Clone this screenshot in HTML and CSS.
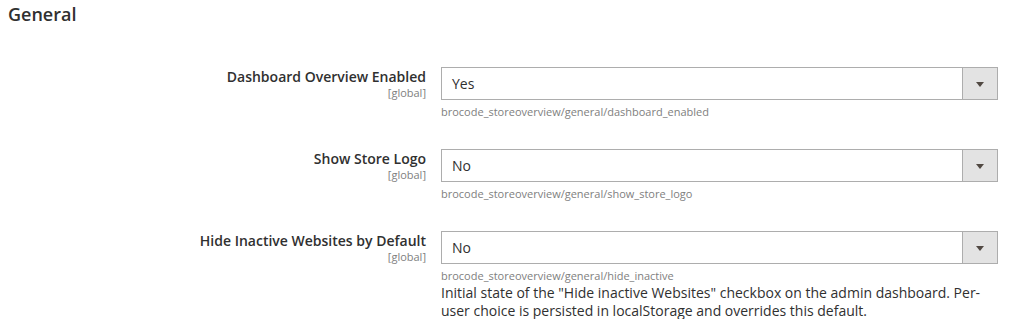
FILE: index.html
```html
<!DOCTYPE html>
<html lang="en">
  <head>
    <meta charset="UTF-8" />
    <meta name="viewport" content="width=device-width, initial-scale=1.0" />
    <title>Store Overview - Configuration</title>
    <link rel="stylesheet" href="styles.css">
  </head>
  <body>
    <div class="section">
      <h2 class="section-title">General</h2>

      <div class="config-rows">
        <div class="config-row">
          <div class="label-col">
            <label class="field-label">Dashboard Overview Enabled</label>
            <span class="scope">[global]</span>
          </div>
          <div class="value-col">
            <div class="select">
              <span class="select-value">Yes</span>
              <span class="select-arrow"></span>
            </div>
            <p class="path">brocode_storeoverview/general/dashboard_enabled</p>
          </div>
        </div>

        <div class="config-row">
          <div class="label-col">
            <label class="field-label">Show Store Logo</label>
            <span class="scope">[global]</span>
          </div>
          <div class="value-col">
            <div class="select">
              <span class="select-value">No</span>
              <span class="select-arrow"></span>
            </div>
            <p class="path">brocode_storeoverview/general/show_store_logo</p>
          </div>
        </div>

        <div class="config-row">
          <div class="label-col">
            <label class="field-label">Hide Inactive Websites by Default</label>
            <span class="scope">[global]</span>
          </div>
          <div class="value-col">
            <div class="select">
              <span class="select-value">No</span>
              <span class="select-arrow"></span>
            </div>
            <p class="path">brocode_storeoverview/general/hide_inactive</p>
            <p class="note">
              Initial state of the "Hide inactive Websites" checkbox on the admin
              dashboard. Per-user choice is persisted in localStorage and
              overrides this default.
            </p>
          </div>
        </div>
      </div>
    </div>
  </body>
</html>
```

FILE: styles.css
```css
body {
  margin: 0;
  background: #fff;
  font-family: "Open Sans", "Liberation Sans", sans-serif;
  color: #303030;
}

.section {
  padding: 4px 11px 0 8px;
}

.section-title {
  margin: 0;
  font-size: 18px;
  line-height: 20px;
  font-weight: 600;
  color: #303030;
}

.config-rows {
  display: flex;
  flex-direction: column;
  gap: 29px;
  margin-top: 43px;
}

.config-row {
  display: grid;
  grid-template-columns: 418px 557px;
  column-gap: 15px;
}

.label-col {
  text-align: right;
}

.field-label {
  display: block;
  font-size: 14px;
  line-height: 18px;
  font-weight: 600;
  padding-top: 1px;
}

.scope {
  display: block;
  font-size: 11px;
  line-height: 13px;
  color: #808080;
}

.select {
  display: flex;
  align-items: center;
  height: 33px;
  box-sizing: border-box;
  border: 1px solid #adadad;
  background: #fff;
}

.select-value {
  flex: 1;
  padding-left: 10px;
  font-size: 14px;
}

.select-arrow {
  position: relative;
  align-self: stretch;
  width: 34px;
  border-left: 1px solid #adadad;
  background: #e3e3e3;
}

.select-arrow::after {
  content: "";
  position: absolute;
  left: 50%;
  top: 50%;
  margin: -2px 0 0 -4px;
  border-left: 4px solid transparent;
  border-right: 4px solid transparent;
  border-top: 5px solid #514943;
}

.path {
  margin: 4px 0 0;
  font-size: 11px;
  line-height: 16px;
  color: #808080;
}

.note {
  margin: 0;
  font-size: 14px;
  line-height: 17.5px;
}
```
